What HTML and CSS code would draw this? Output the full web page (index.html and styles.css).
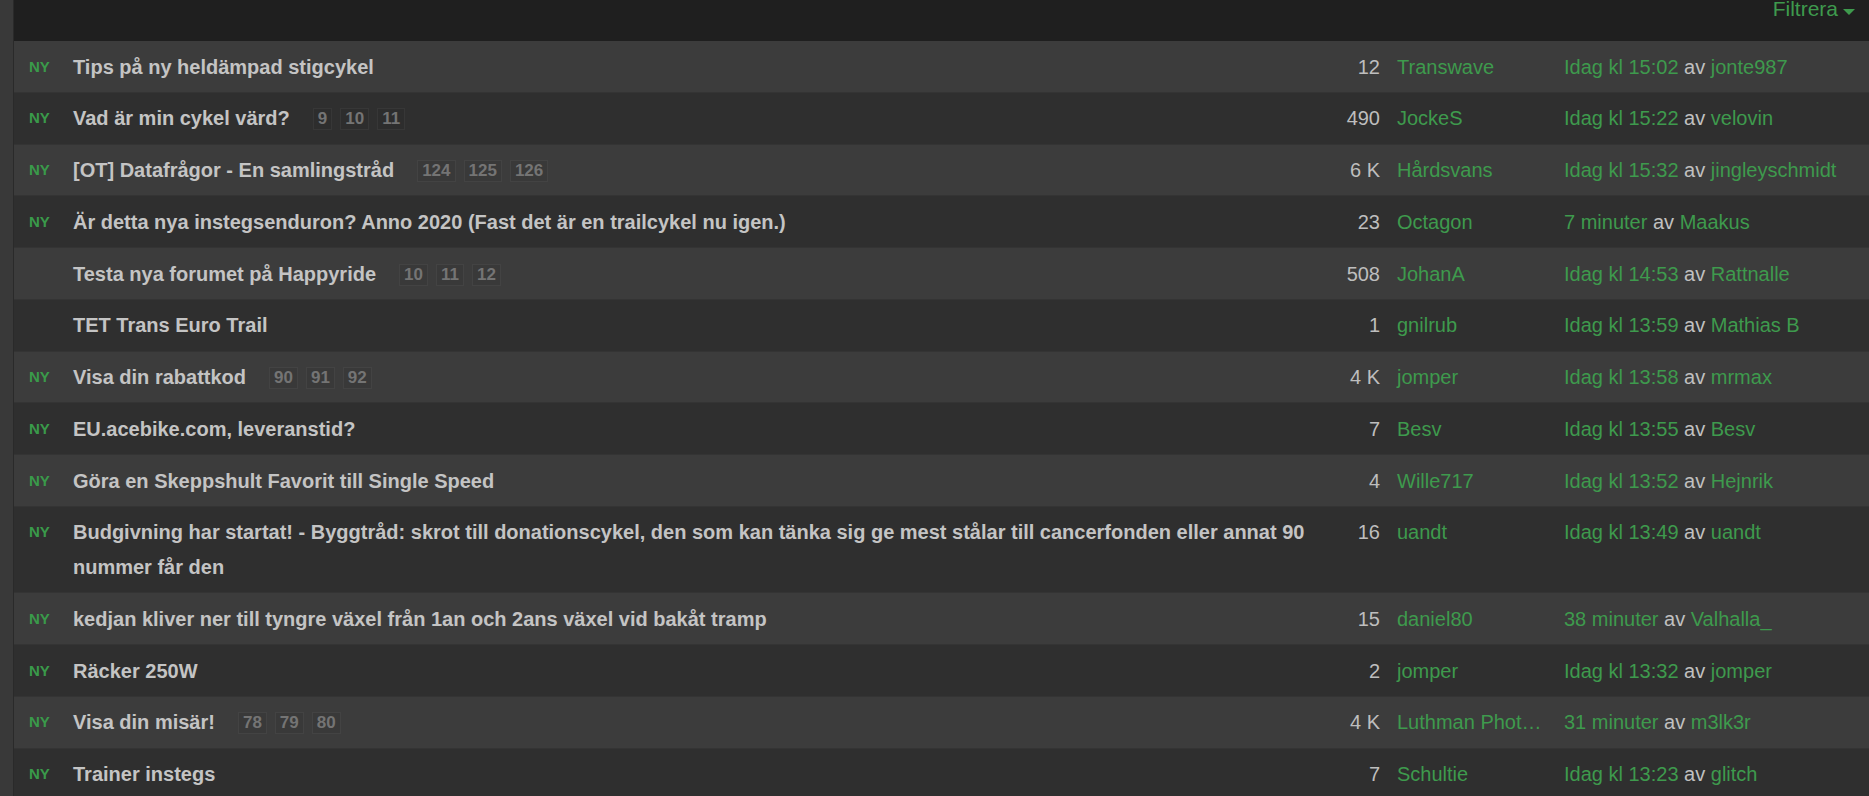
FILE: index.html
```html
<!DOCTYPE html>
<html lang="sv">
<head>
<meta charset="utf-8">
<title>Forum</title>
<link rel="stylesheet" href="styles.css">
</head>
<body>
<div class="page">
  <div class="rail"></div>
  <div class="main">
    <div class="toolbar">
      <a class="filter">Filtrera<span class="caret"></span></a>
    </div>
    <div class="topics">
      <div class="row">
        <div class="new">NY</div>
        <div class="title"><a class="ttext">Tips på ny heldämpad stigcykel</a></div>
        <div class="count">12</div>
        <div class="author"><a>Transwave</a></div>
        <div class="last"><a>Idag kl 15:02</a> av <a>jonte987</a></div>
      </div>
      <div class="row">
        <div class="new">NY</div>
        <div class="title"><a class="ttext">Vad är min cykel värd?</a><span class="pages"><span class="pg">9</span><span class="pg">10</span><span class="pg">11</span></span></div>
        <div class="count">490</div>
        <div class="author"><a>JockeS</a></div>
        <div class="last"><a>Idag kl 15:22</a> av <a>velovin</a></div>
      </div>
      <div class="row">
        <div class="new">NY</div>
        <div class="title"><a class="ttext">[OT] Datafrågor - En samlingstråd</a><span class="pages"><span class="pg">124</span><span class="pg">125</span><span class="pg">126</span></span></div>
        <div class="count">6 K</div>
        <div class="author"><a>Hårdsvans</a></div>
        <div class="last"><a>Idag kl 15:32</a> av <a>jingleyschmidt</a></div>
      </div>
      <div class="row">
        <div class="new">NY</div>
        <div class="title"><a class="ttext">Är detta nya instegsenduron? Anno 2020 (Fast det är en trailcykel nu igen.)</a></div>
        <div class="count">23</div>
        <div class="author"><a>Octagon</a></div>
        <div class="last"><a>7 minuter</a> av <a>Maakus</a></div>
      </div>
      <div class="row">
        <div class="new"></div>
        <div class="title"><a class="ttext">Testa nya forumet på Happyride</a><span class="pages"><span class="pg">10</span><span class="pg">11</span><span class="pg">12</span></span></div>
        <div class="count">508</div>
        <div class="author"><a>JohanA</a></div>
        <div class="last"><a>Idag kl 14:53</a> av <a>Rattnalle</a></div>
      </div>
      <div class="row">
        <div class="new"></div>
        <div class="title"><a class="ttext">TET Trans Euro Trail</a></div>
        <div class="count">1</div>
        <div class="author"><a>gnilrub</a></div>
        <div class="last"><a>Idag kl 13:59</a> av <a>Mathias B</a></div>
      </div>
      <div class="row">
        <div class="new">NY</div>
        <div class="title"><a class="ttext">Visa din rabattkod</a><span class="pages"><span class="pg">90</span><span class="pg">91</span><span class="pg">92</span></span></div>
        <div class="count">4 K</div>
        <div class="author"><a>jomper</a></div>
        <div class="last"><a>Idag kl 13:58</a> av <a>mrmax</a></div>
      </div>
      <div class="row">
        <div class="new">NY</div>
        <div class="title"><a class="ttext">EU.acebike.com, leveranstid?</a></div>
        <div class="count">7</div>
        <div class="author"><a>Besv</a></div>
        <div class="last"><a>Idag kl 13:55</a> av <a>Besv</a></div>
      </div>
      <div class="row">
        <div class="new">NY</div>
        <div class="title"><a class="ttext">Göra en Skeppshult Favorit till Single Speed</a></div>
        <div class="count">4</div>
        <div class="author"><a>Wille717</a></div>
        <div class="last"><a>Idag kl 13:52</a> av <a>Hejnrik</a></div>
      </div>
      <div class="row">
        <div class="new">NY</div>
        <div class="title"><a class="ttext">Budgivning har startat! - Byggtråd: skrot till donationscykel, den som kan tänka sig ge mest stålar till cancerfonden eller annat 90 nummer får den</a></div>
        <div class="count">16</div>
        <div class="author"><a>uandt</a></div>
        <div class="last"><a>Idag kl 13:49</a> av <a>uandt</a></div>
      </div>
      <div class="row">
        <div class="new">NY</div>
        <div class="title"><a class="ttext">kedjan kliver ner till tyngre växel från 1an och 2ans växel vid bakåt tramp</a></div>
        <div class="count">15</div>
        <div class="author"><a>daniel80</a></div>
        <div class="last"><a>38 minuter</a> av <a>Valhalla_</a></div>
      </div>
      <div class="row">
        <div class="new">NY</div>
        <div class="title"><a class="ttext">Räcker 250W</a></div>
        <div class="count">2</div>
        <div class="author"><a>jomper</a></div>
        <div class="last"><a>Idag kl 13:32</a> av <a>jomper</a></div>
      </div>
      <div class="row">
        <div class="new">NY</div>
        <div class="title"><a class="ttext">Visa din misär!</a><span class="pages"><span class="pg">78</span><span class="pg">79</span><span class="pg">80</span></span></div>
        <div class="count">4 K</div>
        <div class="author"><a>Luthman Photography</a></div>
        <div class="last"><a>31 minuter</a> av <a>m3lk3r</a></div>
      </div>
      <div class="row">
        <div class="new">NY</div>
        <div class="title"><a class="ttext">Trainer instegs</a></div>
        <div class="count">7</div>
        <div class="author"><a>Schultie</a></div>
        <div class="last"><a>Idag kl 13:23</a> av <a>glitch</a></div>
      </div>
    </div>
  </div>
</div>
</body>
</html>
```

FILE: styles.css
```css
html, body {
  margin: 0;
  padding: 0;
  background: #2f2f2f;
  overflow: hidden;
}

body {
  font-family: "Liberation Sans", Arial, sans-serif;
  color: #c0c0c0;
}

.page {
  display: flex;
  min-height: 100vh;
}

.rail {
  width: 13px;
  flex: 0 0 13px;
  background: #393939;
  border-right: 1px solid #2a2a2a;
}

.main {
  flex: 1;
  min-width: 0;
}

.toolbar {
  height: 41px;
  background: #1f1f1f;
  display: flex;
  justify-content: flex-end;
  align-items: flex-start;
  padding-right: 14px;
}

.filter {
  color: #3e9a4d;
  font-size: 21px;
  line-height: 18px;
  display: flex;
  align-items: flex-start;
}

.caret {
  display: inline-block;
  width: 0;
  height: 0;
  border-left: 6px solid transparent;
  border-right: 6px solid transparent;
  border-top: 6px solid #3e9a4d;
  margin-left: 5px;
  margin-top: 9px;
}

.row {
  display: grid;
  grid-template-columns: 59px 1fr 60px 167px 322px;
  align-items: start;
  padding: 8.5px 0 7.5px;
  border-bottom: 1px solid #343434;
  line-height: 34.75px;
  font-size: 20px;
  background: #3c3c3c;
}

.row:nth-child(even) {
  background: #2f2f2f;
}

.new {
  padding-left: 15px;
  font-size: 15px;
  font-weight: bold;
  color: #3a9a4a;
}

.title {
  padding-right: 10px;
}

.ttext {
  font-weight: bold;
  color: #c4c4c4;
}

.pages {
  margin-left: 23px;
  display: inline-flex;
  gap: 8px;
  vertical-align: top;
  padding-top: 7px;
}

.pg {
  display: inline-block;
  font-size: 17px;
  font-weight: bold;
  line-height: 20px;
  padding: 0 4px;
  color: #747474;
  background: rgba(0, 0, 0, 0.04);
  border: 1px solid rgba(255, 255, 255, 0.05);
}

.count {
  text-align: right;
  color: #bebebe;
}

.author {
  padding-left: 17px;
  white-space: nowrap;
  overflow: hidden;
  text-overflow: ellipsis;
  color: #3e9a4d;
}

.last {
  padding-left: 17px;
  white-space: nowrap;
  color: #c0c0c0;
}

.author a,
.last a {
  color: #3e9a4d;
}
```
